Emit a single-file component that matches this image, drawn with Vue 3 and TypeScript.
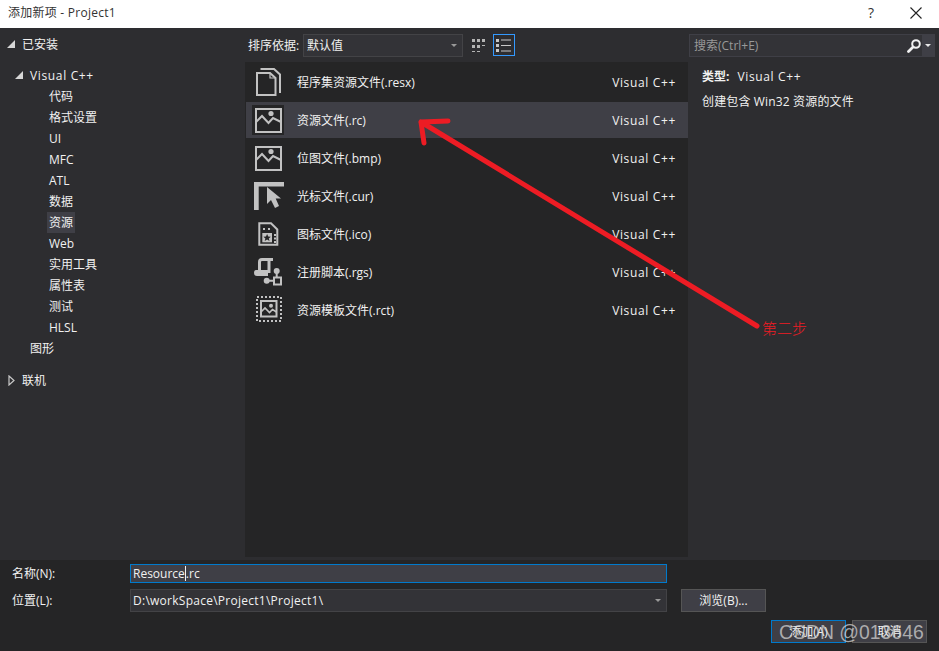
<script setup lang="ts">
interface Row { name: string; icon: string; active?: boolean }
const rows: Row[] = [
  { name: '程序集资源文件(.resx)', icon: 'resx' },
  { name: '资源文件(.rc)', icon: 'image', active: true },
  { name: '位图文件(.bmp)', icon: 'image' },
  { name: '光标文件(.cur)', icon: 'cursor' },
  { name: '图标文件(.ico)', icon: 'ico' },
  { name: '注册脚本(.rgs)', icon: 'rgs' },
  { name: '资源模板文件(.rct)', icon: 'rct' },
]
const cats = ['代码', '格式设置', 'UI', 'MFC', 'ATL', '数据', '资源', 'Web', '实用工具', '属性表', '测试', 'HLSL']
</script>

<template>
  <div class="dialog">
    <header class="title">
      <span class="title-text">添加新项 - Project1</span>
      <div class="title-btns">
        <span class="help">?</span>
        <svg width="14" height="14" viewBox="0 0 14 14"><path d="M1.5 1.5l11 11M12.5 1.5l-11 11" stroke="#222" stroke-width="1.1" fill="none" /></svg>
      </div>
    </header>

    <main class="body">
      <aside class="tree">
        <div class="t0"><i class="tri"></i>已安装</div>
        <div class="t1"><i class="tri"></i><span class="vc">Visual C++</span></div>
        <div v-for="c in cats" :key="c" class="t2"><span :class="{ sel: c === '资源' }">{{ c }}</span></div>
        <div class="t1">图形</div>
        <div class="t0 online">
          <svg width="7" height="11" viewBox="0 0 7 11"><path d="M1 1l5 4.5L1 10z" fill="none" stroke="#c8c8c8" stroke-width="1.2" /></svg>联机
        </div>
      </aside>

      <section class="center">
        <div class="sortbar">
          <span class="sortlabel">排序依据:</span>
          <div class="combo"><span>默认值</span><i class="caret"></i></div>
          <svg class="gridicon" width="15" height="16" viewBox="0 0 15 16">
            <path d="M0 1h3v3H0zM5 1h3v3H5zM10 1h3v3h-3zM0 7h3v3H0zM5 7h3v3H5zM10 7h3v1h-3zM0 13h3v1H0zM5 13h3v1H5z" fill="#b4b4b4" />
          </svg>
          <div class="listbtn">
            <svg width="16" height="15" viewBox="0 0 16 15">
              <path d="M0 1h3v3H0zM0 6h3v3H0zM0 11h3v3H0z" fill="#c8c8c8" />
              <path d="M5 2h10M5 7.500h10M5 13h10" stroke="#c8c8c8" stroke-width="1" />
            </svg>
          </div>
        </div>
        <div class="list">
          <div v-for="r in rows" :key="r.name" class="row" :class="{ active: r.active }">
            <div class="iconbox">
              <svg width="32" height="30" viewBox="0 0 32 30" fill="none" stroke="#c2c2c2" stroke-width="2">
                <template v-if="r.icon === 'resx'">
                  <path d="M5 6h13l5.500 5v17H5z" />
                  <path d="M18 6v5h5.500" stroke-width="1.200" />
                  <path d="M8.500 2h13.500l6 5.500v18.500" stroke-width="2" />
                </template>
                <template v-else-if="r.icon === 'image'">
                  <rect x="4" y="4" width="25" height="23" />
                  <path d="M4 17l6-6 6.500 7 4.500-5 8 4" />
                  <circle cx="19" cy="8.500" r="2.600" fill="#c2c2c2" stroke="none" />
                </template>
                <template v-else-if="r.icon === 'cursor'">
                  <path d="M2 1h30v4.500H6.700V29H2z" fill="#c2c2c2" stroke="none" />
                  <path d="M15 6v17l4-4 4 8 4-2-3.300-7.500H29z" fill="#c2c2c2" stroke="none" />
                </template>
                <template v-else-if="r.icon === 'ico'">
                  <path d="M7.300 4.300H19l6.300 6.200v15.200H7.300z" />
                  <path d="M11 9h2v2h-2zM16 9h2v2h-2zM22 15h2v2h-2zM22 18.500h2v2h-2zM22 22h2v2h-2z" fill="#c2c2c2" stroke="none" />
                  <rect x="10.300" y="14" width="9.700" height="9.300" fill="#c2c2c2" stroke="none" />
                  <path d="M15.100 15l1.100 2.500 2.600.2-2 1.700.7 2.500-2.400-1.400-2.400 1.400.7-2.500-2-1.700 2.600-.2z" fill="#252526" stroke="none" />
                </template>
                <template v-else-if="r.icon === 'rgs'">
                  <path d="M7.500 13V5q0-2.500 2.500-2.500h11M17 3v13" stroke-width="3" />
                  <path d="M4 13h12v6H5q-3 0-3-3t2-3z" fill="#c2c2c2" stroke="none" />
                  <circle cx="24.700" cy="14" r="3" fill="#c2c2c2" stroke="none" />
                  <circle cx="14.700" cy="23.700" r="3" fill="#c2c2c2" stroke="none" />
                  <path d="M24.700 14v6M14.700 23.700h7" />
                  <rect x="22" y="20.500" width="7" height="7" />
                </template>
                <template v-else>
                  <rect x="5" y="2" width="24" height="24" stroke-dasharray="2 2" />
                  <rect x="9" y="6" width="15.500" height="15.500" />
                  <path d="M9 17l4-4 4.500 4.500 3-3 4 2.500" stroke-width="1.600" />
                  <circle cx="19" cy="10.700" r="2" fill="#c2c2c2" stroke="none" />
                </template>
              </svg>
            </div>
            <span class="rowname">{{ r.name }}</span>
            <span class="rowlang vc">Visual C++</span>
          </div>
        </div>
      </section>

      <aside class="detail">
        <div class="searchbox">
          <span class="ph">搜索(Ctrl+E)</span>
          <svg class="mag" width="14" height="16" viewBox="0 0 14 16">
            <circle cx="9" cy="6" r="3.800" fill="none" stroke="#f1f1f1" stroke-width="2" />
            <path d="M6 9l-4.500 4.500" stroke="#f1f1f1" stroke-width="2.800" stroke-linecap="round" />
          </svg>
          <div class="searchdrop"><i class="caret light"></i></div>
        </div>
        <div class="info">
          <div class="type"><b>类型:</b><span class="vc">Visual C++</span></div>
          <div class="desc">创建包含 Win32 资源的文件</div>
        </div>
      </aside>
    </main>

    <footer class="footer">
      <div class="frow first">
        <label>名称(N):</label>
        <div class="field focus"><span>Resource</span><i class="cursor"></i><span>.rc</span></div>
      </div>
      <div class="frow second">
        <label>位置(L):</label>
        <div class="field loc"><span class="path">D:\workSpace\Project1\Project1\</span><i class="caret"></i></div>
        <button class="btn browse">浏览(B)...</button>
      </div>
      <div class="actions">
        <button class="btn primary">添加(A)</button>
        <button class="btn">取消</button>
      </div>
    </footer>

    <svg class="arrow" width="939" height="651" viewBox="0 0 939 651" fill="none" stroke="#ed1c24" stroke-width="5" stroke-linecap="round" stroke-linejoin="round">
      <path d="M757 326L421 122M421 122L448 121M421 122L424 143" />
    </svg>
    <span class="step">第二步</span>
    <span class="mark">CSDN @013646</span>
  </div>
</template>

<style scoped>
.dialog {
  position: relative;
  width: 939px;
  height: 651px;
  overflow: hidden;
  display: flex;
  flex-direction: column;
  background: #2d2d30;
  color: #f1f1f1;
  font: 12px/16px "Open Sans", "Noto Sans CJK SC", sans-serif;
}
.title {
  height: 28px;
  flex: none;
  background: #fff;
  color: #333;
  display: flex;
  align-items: center;
  justify-content: space-between;
  padding: 0 16px 2px 8px;
  box-sizing: border-box;
}
.title-text { letter-spacing: 0.25px; }
.title-btns { display: flex; align-items: center; gap: 35px; }
.help { font-size: 14px; }
.vc { letter-spacing: 0.65px; }
.body {
  flex: 1;
  min-height: 0;
  display: grid;
  grid-template-columns: 245px 444px 1fr;
}
.tree { padding-top: 6px; }
.t0, .t1, .t2 { height: 21px; line-height: 21px; white-space: nowrap; }
.t0 { padding-left: 22px; position: relative; }
.t1 { padding-left: 30px; position: relative; margin-top: 0; }
.t0 + .t1 { margin-top: 10px; }
.t2 { padding-left: 49px; }
.sel { display: inline-block; background: #3f3f46; margin-left: -2px; padding: 0 2px; }
.tri {
  position: absolute;
  left: 7px;
  top: 6px;
  width: 0;
  height: 0;
  border-style: solid;
  border-width: 0 0 8px 8px;
  border-color: transparent transparent #d6d6d6 transparent;
}
.t1 .tri { left: 15px; top: 6px; }
.online { margin-top: 11px; }
.online svg { position: absolute; left: 8px; top: 5px; }
.center { display: flex; flex-direction: column; min-height: 0; }
.sortbar {
  height: 34px;
  flex: none;
  display: flex;
  align-items: flex-start;
  padding: 6px 0 0 3px;
  box-sizing: border-box;
}
.sortlabel { line-height: 23px; width: 55px; flex: none; }
.combo {
  width: 160px;
  height: 23px;
  box-sizing: border-box;
  border: 1px solid #434346;
  background: #333337;
  padding-left: 3px;
  line-height: 21px;
  display: flex;
  align-items: center;
  justify-content: space-between;
}
.caret {
  display: block;
  width: 0;
  height: 0;
  border-style: solid;
  border-width: 3px 3.500px 0;
  border-color: #999 transparent transparent;
  margin-right: 5px;
}
.caret.light { border-color: #e8e8e8 transparent transparent; margin: 0; }
.gridicon { margin: 4px 0 0 9px; flex: none; }
.listbtn {
  width: 22px;
  height: 22px;
  margin-left: 6px;
  box-sizing: border-box;
  border: 1px solid #3399ff;
  display: flex;
  align-items: center;
  justify-content: center;
}
.list {
  flex: 1;
  margin-right: 1px;
  background: #252526;
  padding: 2px 0 0 1px;
  margin-bottom: 3px;
}
.row {
  height: 36px;
  margin-bottom: 2px;
  padding: 0 12px 0 6px;
  display: flex;
  align-items: center;
}
.row.active { background: #3f3f46; }
.iconbox { width: 32px; height: 30px; flex: none; }
.iconbox svg { display: block; }
.row.active .iconbox { background: #252526; }
.rowname { margin-left: 13px; flex: 1; padding-top: 2px; }
.rowlang { padding-top: 2px; }
.detail { display: flex; flex-direction: column; }
.searchbox {
  margin-top: 6px;
  width: 246px;
  height: 23px;
  box-sizing: border-box;
  border: 1px solid #3f3f46;
  background: #333337;
  display: flex;
  align-items: center;
  position: relative;
}
.ph { color: #999; margin-left: 4px; flex: 1; }
.mag { flex: none; margin-right: 1px; }
.searchdrop {
  width: 12px;
  height: 21px;
  flex: none;
  background: #3f3f46;
  display: flex;
  align-items: center;
  justify-content: center;
}
.info { padding: 10px 0 0 13px; }
.type { display: flex; gap: 8px; height: 20px; line-height: 20px; }
.type b { font-weight: 700; }
.desc { margin-top: 5px; line-height: 20px; letter-spacing: 0.15px; }
.footer {
  height: 91px;
  flex: none;
  background: #252526;
  box-sizing: border-box;
  padding: 4px 12px 0;
  display: flex;
  flex-direction: column;
}
.frow { display: flex; align-items: center; }
.frow label { width: 118px; flex: none; }
.first { height: 19px; }
.second { height: 23px; margin-top: 6px; }
.field {
  width: 537px;
  height: 100%;
  box-sizing: border-box;
  background: #333337;
  border: 1px solid #434346;
  padding-left: 2px;
  display: flex;
  align-items: center;
}
.focus { border-color: #007acc; background: #3f3f46; }
.loc { justify-content: space-between; padding-left: 2px; }
.path { letter-spacing: 0.26px; }
.cursor { width: 1px; height: 15px; background: #f1f1f1; }
.btn {
  width: 75px;
  height: 23px;
  padding: 0;
  font: inherit;
  color: #f1f1f1;
  background: #3f3f46;
  border: 1px solid #555;
  box-sizing: border-box;
}
.browse { width: 85px; margin-left: 14px; }
.primary { border-color: #007acc; }
.actions { display: flex; justify-content: flex-end; gap: 6px; margin-top: 8px; }
.arrow { position: absolute; left: 0; top: 0; pointer-events: none; }
.step {
  position: absolute;
  left: 762px;
  top: 319px;
  color: #ed1c24;
  font-size: 15px;
  font-weight: 300;
  line-height: 18px;
}
.mark {
  position: absolute;
  left: 779px;
  top: 620px;
  font: 19.400px/24px "Liberation Sans", sans-serif;
  color: rgba(215, 215, 215, 0.72);
  white-space: nowrap;
}
</style>
